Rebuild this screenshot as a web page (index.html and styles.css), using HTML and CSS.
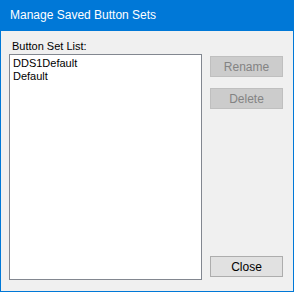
FILE: index.html
```html
<!DOCTYPE html>
<html lang="en">
<head>
<meta charset="UTF-8">
<title>Manage Saved Button Sets</title>
<link rel="stylesheet" href="styles.css">
</head>
<body>

<div class="window">
    <div class="title-bar">Manage Saved Button Sets</div>

    <div class="client">
        <div class="list-column">
            <div class="list-label">Button Set List:</div>
            <div class="list-box">
                <div class="list-item">DDS1Default</div>
                <div class="list-item">Default</div>
            </div>
        </div>

        <div class="button-column">
            <button class="btn" disabled>Rename</button>
            <button class="btn" disabled>Delete</button>
            <button class="btn close-btn">Close</button>
        </div>
    </div>
</div>

</body>
</html>
```

FILE: styles.css
```css
body {
    margin: 0;
    padding: 0;
    background: #f0f0f0;
    font-family: "Liberation Sans", Arial, sans-serif;
    font-size: 11px;
}

.window {
    width: 294px;
    height: 292px;
    box-sizing: border-box;
    border: 1px solid #0078d7;
    border-top: none;
    display: flex;
    flex-direction: column;
    background: #f0f0f0;
}

.title-bar {
    height: 31px;
    flex-shrink: 0;
    background: #0078d7;
    color: #fff;
    font-family: "Liberation Sans", Arial, sans-serif;
    font-size: 12px;
    line-height: 31px;
    padding-left: 10px;
    margin: 0 -1px;
}

.client {
    flex: 1;
    display: flex;
    padding: 9px 10px 11px 8px;
}

.list-column {
    width: 193px;
    display: flex;
    flex-direction: column;
}

.list-label {
    height: 14px;
    line-height: 13px;
    padding-left: 3px;
    color: #000;
}

.list-box {
    flex: 1;
    background: #fff;
    border: 1px solid #828790;
    padding: 2px 3px;
}

.list-item {
    line-height: 13px;
    color: #000;
}

.button-column {
    margin-left: 8px;
    width: 73px;
    display: flex;
    flex-direction: column;
    padding-top: 16px;
    padding-bottom: 3px;
}

.btn {
    width: 73px;
    height: 21px;
    margin-bottom: 11px;
    font-family: "Liberation Sans", Arial, sans-serif;
    font-size: 12px;
    background: #e1e1e1;
    border: 1px solid #adadad;
    color: #000;
    padding: 0;
}

.btn:disabled {
    background: #cccccc;
    border-color: #bfbfbf;
    color: #838383;
}

.close-btn {
    margin-top: auto;
    margin-bottom: 0;
}
```
